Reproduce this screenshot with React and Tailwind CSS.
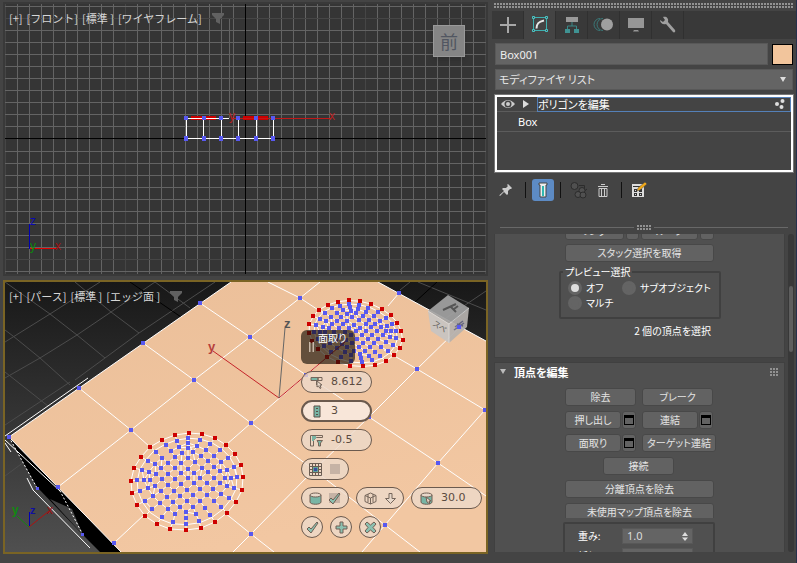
import { useState } from 'react';
import clsx from 'clsx';

// bevel mesh, drawn in a 400 x 370 local space
const RIM = [
  [207, 39], [246, 42], [285, 54], [318, 75], [345, 102], [363, 135], [369, 171], [366, 210],
  [348, 246], [321, 279], [285, 306], [243, 324], [198, 330], [150, 327], [111, 312], [75, 288],
  [51, 255], [36, 219], [33, 183], [42, 144], [63, 111], [90, 81], [126, 60], [165, 45],
];

const INNER = [
  [204, 54], [240, 60], [171, 63], [270, 72], [204, 69], [138, 75], [177, 81], [204, 84], [231, 78],
  [300, 90], [258, 90], [153, 93], [108, 96], [186, 99], [219, 96], [324, 114], [282, 108], [243, 108],
  [204, 114], [165, 111], [126, 114], [84, 123], [225, 126], [264, 123], [303, 126], [144, 129],
  [183, 129], [105, 132], [342, 141], [66, 150], [87, 156], [123, 144], [165, 144], [204, 147],
  [246, 144], [282, 141], [108, 162], [144, 162], [183, 159], [222, 159], [264, 156], [300, 153],
  [351, 171], [333, 174], [315, 174], [322, 150], [51, 180], [72, 180], [90, 180], [126, 177],
  [165, 177], [204, 174], [240, 174], [282, 174], [60, 213], [84, 204], [105, 198], [144, 195],
  [183, 192], [222, 189], [261, 189], [300, 189], [322, 198], [342, 204], [123, 213], [162, 213],
  [201, 210], [240, 207], [279, 207], [303, 222], [327, 234], [99, 228], [141, 231], [180, 228],
  [219, 225], [261, 225], [75, 243], [120, 249], [159, 246], [201, 243], [240, 243], [282, 243],
  [96, 267], [144, 267], [180, 261], [219, 261], [255, 264], [303, 261], [126, 291], [165, 282],
  [198, 276], [228, 282], [270, 285], [159, 306], [198, 294], [237, 303], [198, 312],
];

const ALL = [...RIM, ...INNER];

const EDGES = [];
ALL.forEach((a, i) => {
  ALL.forEach((b, j) => {
    if (j <= i || (i < 24 && j < 24)) return;
    if (Math.hypot(a[0] - b[0], a[1] - b[1]) < 32) EDGES.push([i, j]);
  });
});

const leftDisc = ([x, y]) => [120 + x / 3, 420 + y / 3];
const rightDisc = ([x, y]) => {
  const dx = x - 202;
  const dy = y - 181;
  return [200 + (467 + 0.8275 * dx + 0.17 * dy) / 3, 280 + (158 + 0.0094 * dx + 0.6807 * dy) / 3];
};

const SURFACE_VERTS = [
  [9, 437], [79, 388], [143, 343], [200, 303], [58, 487], [131, 430], [194, 380], [250, 337],
  [300, 298], [114, 543], [251, 423], [306, 375], [399, 293], [251, 534], [314, 470], [369, 417],
  [417, 369], [460, 327], [385, 525], [438, 463], [485, 410],
];

const SURFACE_LINES = [
  '58,487 131,430 194,380 250,337 300,298 320,282',
  '114,543 145,514',
  '226,445 251,423 306,375 318,365',
  '388,306 399,293',
  '233,552 251,534 314,470 369,417 417,369 460,327',
  '362,552 385,525 438,463 485,410',
  '79,388 131,430 150,447',
  '225,513 251,534 274,552',
  '143,343 194,380 251,423 314,470 385,525 420,552',
  '200,303 250,337 306,375 369,417 438,463 486,496',
  '268,282 300,298 326,315',
  '384,350 417,369 485,410',
];

const FLOOR_LINES = [
  '5,342 50,314 100,282',
  '5,378 40,358 77,335 111,312 155,282',
  '75,380 105,358 139,333 215,282',
  '5,330 13,336 40,358 70,385',
  '5,282 50,314 77,335 105,358',
  '75,282 111,312 139,333',
  '155,282 190,308',
  '5,425 70,382',
  '5,372 48,406',
  '5,476 24,462',
  '418,282 486,310',
  '400,290 410,282',
  '446,318 486,291',
];

const points = (list) => list.map((p) => p.join(',')).join(' ');

function Mesh({ map }) {
  const pts = ALL.map(map);
  const rim = RIM.map(map);
  const ring = RIM.map(([x, y]) => map([202 + (x - 202) * 0.89, 183 + (y - 183) * 0.89]));
  return (
    <g>
      <g fill="none" stroke="#fff" strokeWidth="1">
        <polygon points={points(rim)} />
        <polygon points={points(ring)} />
        {EDGES.map(([a, b]) => (
          <line key={`${a}-${b}`} x1={pts[a][0]} y1={pts[a][1]} x2={pts[b][0]} y2={pts[b][1]} />
        ))}
      </g>
      <g shapeRendering="crispEdges">
        {pts.map(([x, y], i) => (
          <rect
            key={i}
            x={Math.round(x) - 2}
            y={Math.round(y) - 2}
            width="4"
            height="4"
            fill={i < 24 ? '#cd0000' : '#5858f0'}
          />
        ))}
      </g>
    </g>
  );
}

function FrontScene() {
  const xs = Array.from({ length: 41 }, (_, i) => 5 + i * 12);
  const ys = [
    ...Array.from({ length: 12 }, (_, i) => 6 + i * 12),
    ...Array.from({ length: 11 }, (_, i) => 151 + i * 12),
  ];
  const cols = [186, 204, 221, 238, 256, 273];
  return (
    <svg
      viewBox="5 4 481 270"
      preserveAspectRatio="xMidYMid slice"
      className="block h-full w-full bg-[#353535] [font-family:'Liberation_Sans',sans-serif]"
    >
      <g shapeRendering="crispEdges">
        {xs.map((x) => (
          <rect key={x} x={x} y="4" width="1" height="270" fill={(x - 5) % 120 === 0 ? '#464646' : '#646464'} />
        ))}
        {ys.map((y) => (
          <rect key={y} x="5" y={y} width="481" height="1" fill={y === 18 || y === 259 ? '#464646' : '#646464'} />
        ))}
        <rect x="229" y="19" width="1" height="99" fill="#646464" />
        <rect x="245" y="4" width="1" height="270" fill="#000" />
        <rect x="5" y="138" width="481" height="1" fill="#000" />
        {cols.map((x) => (
          <rect key={x} x={x === 204 ? 203 : x} y="118" width="1" height="21" fill="#fff" />
        ))}
        <rect x="186" y="138" width="88" height="1" fill="#fff" />
        <rect x="191" y="116" width="25" height="4" fill="#cd0000" />
        <rect x="243" y="116" width="25" height="4" fill="#cd0000" />
        <rect x="186" y="118" width="43" height="1" fill="#fff" />
        <rect x="232" y="118" width="99" height="1" fill="#c01818" />
        {cols.map((x) => (
          <g key={x} fill="#5858f0">
            <rect x={x - 2} y="116" width="4" height="4" />
            <rect x={x - 2} y="136" width="4" height="5" />
          </g>
        ))}
        <path d="M29 224h1v25h-1z" fill="#0000b4" />
        <path d="M30 248h26v1H30z" fill="#e00000" />
      </g>
      <text x="229" y="120" fontSize="12" fill="#b82020">y</text>
      <text x="329" y="120" fontSize="12" fill="#b82020">x</text>
      <text x="30" y="225" fontSize="12" fill="#0a0ab0">z</text>
      <text x="30" y="250" fontSize="12" fill="#0b8a0b">y</text>
      <text x="55" y="250" fontSize="12" fill="#a01010">x</text>
    </svg>
  );
}

function PerspectiveScene() {
  return (
    <svg
      viewBox="5 282 481 270"
      preserveAspectRatio="xMidYMid slice"
      className="block h-full w-full [font-family:'Liberation_Sans',sans-serif]"
    >
      <defs>
        <linearGradient id="sky" x1="0" y1="0" x2="0" y2="1">
          <stop offset="0" stopColor="#181818" />
          <stop offset="1" stopColor="#505050" />
        </linearGradient>
        <linearGradient id="skin" x1="0" y1="0" x2="0.4" y2="1">
          <stop offset="0" stopColor="#ebbf99" />
          <stop offset="1" stopColor="#f2c7a2" />
        </linearGradient>
      </defs>
      <rect x="5" y="282" width="481" height="272" fill="url(#sky)" />
      <g fill="none" stroke="#4c4c4c" strokeWidth="1">
        {FLOOR_LINES.map((l) => (
          <polyline key={l} points={l} />
        ))}
      </g>
      <path d="M130 282 181 317M437 282 414 303" stroke="#000" />
      <polygon points="9,437 37,487 83,535 102,554 124,554" fill="#000" />
      <polygon points="50,499 83,535 72,509" fill="#444" />
      <polygon points="231,282 378,282 486,341 486,554 123,554 9,437" fill="url(#skin)" />
      <g fill="none" stroke="#fff" strokeWidth="1">
        <path d="M231 282 9 437 123 554M378 282 486 341M5 436 88 378" />
        <path d="M5 440 60 491M27 478 33 490 90 548M5 443l6 9" />
        <path d="M9 437 37 488M58 487 83 535" strokeDasharray="2 2" />
        {SURFACE_LINES.map((l) => (
          <polyline key={l} points={l} />
        ))}
      </g>
      <Mesh map={leftDisc} />
      <Mesh map={rightDisc} />
      <g shapeRendering="crispEdges" fill="#5858f0">
        {SURFACE_VERTS.map(([x, y]) => (
          <rect key={`${x}-${y}`} x={x - 2} y={y - 2} width="4" height="4" />
        ))}
        <rect x="36" y="487" width="3" height="3" />
        <rect x="81" y="533" width="3" height="3" />
      </g>
      <path d="M279 398 213 351M279 398 345 342" stroke="#c4242a" fill="none" />
      <path d="M279 398 285 328" stroke="#666" fill="none" />
      <text x="208" y="351" fontSize="13" fontWeight="bold" fill="#b5403c">y</text>
      <text x="284" y="328" fontSize="13" fontWeight="bold" fill="#555">z</text>
      <path d="M29.500 526V512" stroke="#0000b4" />
      <path d="M29 527 49 511" stroke="#b01010" />
      <path d="M29 527 17 516" stroke="#108a10" />
      <text x="30" y="514" fontSize="11" fontWeight="bold" fill="#1010a0">z</text>
      <text x="47" y="514" fontSize="12" fill="#a01010">x</text>
      <text x="12" y="514" fontSize="12" fontWeight="bold" fill="#108a10">y</text>
      {/* view cube */}
      <g opacity="0.93">
        <polygon points="448,295 469,308 449,324 428,311" fill="#a2a2a2" />
        <polygon points="428,311 449,324 449,343 431,331" fill="#c8c5c2" />
        <polygon points="449,324 469,308 467,327 449,343" fill="#b5b1ae" />
        <path d="M428 311 449 324 469 308M449 324v19" stroke="#d8d8d8" fill="none" />
        <path d="M443 310l13-6M450 306l6 6M454 309l4-3" stroke="#5a5a5a" strokeWidth="2" fill="none" />
        <text x="432" y="325" fontSize="8" fill="#555" transform="rotate(33 432 325)" className="[font-family:'Noto_Sans_CJK_JP',sans-serif]">
          スペ
        </text>
        <path d="M454 330l10-7M457 324l6 2M455 327l8-6" stroke="#6a6a86" strokeWidth="1.500" />
      </g>
      <rect x="457" y="325" width="4" height="4" fill="#5858f0" />
    </svg>
  );
}

function Funnel() {
  return (
    <svg viewBox="0 0 12 11" className="h-[11px] w-3" fill="#616161">
      <path d="M0 0h12v2L8 6v5L4 9V6L0 2z" />
    </svg>
  );
}

function ViewportLabels({ items }) {
  return (
    <div className="absolute top-[6px] left-1 flex items-center gap-1 text-[11px] leading-4 text-[#d6d6d6] [font-feature-settings:normal]">
      {items.map((t) => (
        <button key={t} type="button">
          {t}
        </button>
      ))}
      <button type="button" aria-label="フィルタ" className="ml-[6px]">
        <Funnel />
      </button>
    </div>
  );
}

const pill = 'flex h-[22px] items-center rounded-full border-[#6b5a4e] bg-[#ecd9cb]/80 text-[#5a4a40]';

function CaddyField({ label, value, icon, active }) {
  return (
    <label
      className={clsx(pill, 'w-[71px] gap-2', active ? 'border-2 bg-[#f8e6d9] pl-[7px]' : 'border pl-2')}
    >
      {icon}
      <input
        aria-label={label}
        defaultValue={value}
        className="w-9 bg-transparent text-[11px] leading-4 outline-none [font-family:'DejaVu_Sans',sans-serif]"
      />
    </label>
  );
}

const caddySvg = 'h-[13px] w-[13px] shrink-0';

function Check() {
  return (
    <svg viewBox="0 0 13 13" className={caddySvg}>
      <path d="M1 8l2-2 2 2 6-7 1 1-7 10z" fill="#8cc0b0" stroke="#705f54" />
    </svg>
  );
}

function Caddy() {
  return (
    <div className="absolute top-12 left-[296px] flex flex-col gap-[7px]">
      <div className="flex h-[34px] w-[54px] gap-1 rounded-md bg-[#191108]/65 pl-2 text-[10px] leading-4 text-white">
        <svg viewBox="0 0 5 10" className="mt-3 h-[10px] w-[5px]" fill="#c8b8a8">
          <path d="M0 0h1.500v10H0zM3.500 0H5v10H3.500z" />
        </svg>
        面取り
      </div>
      <CaddyField
        label="量"
        value="8.612"
        icon={
          <svg viewBox="0 0 13 13" className={caddySvg} fill="none" stroke="#75665b">
            <path d="M1 1.500h7v3H1z" fill="#78b5a5" />
            <path d="M8 1.500h4v3H8zM6.500 5v4" />
            <path d="M7 5l5 4H10l1 3-1 .5L8.500 10 7 11z" fill="#e8d8ca" />
          </svg>
        }
      />
      <CaddyField
        active
        label="セグメント"
        value="3"
        icon={
          <svg viewBox="0 0 13 13" className={caddySvg} stroke="#5b5048">
            <path d="M4 1h6v11H4z" fill="#78b5a5" />
            <path d="M6 3.500h2M6 6.500h2M6 9.500h2" />
          </svg>
        }
      />
      <CaddyField
        label="張り"
        value="-0.5"
        icon={
          <svg viewBox="0 0 13 13" className={caddySvg} fill="none" stroke="#75665b">
            <path d="M.5 12V1.500h12v2h-6L3.500 6v6H.5" />
            <path d="M2 2h4v3H4v2H2z" fill="#78b5a5" stroke="none" />
            <path d="M7 6.500h5.500L10.500 9v3h-2V9z" fill="#78b5a5" />
          </svg>
        }
      />
      <button type="button" aria-label="面を開く" className={clsx(pill, 'w-12 gap-2 border pl-[7px]')}>
        <svg viewBox="0 0 13 13" className={caddySvg} fill="none" stroke="#6b5d52">
          <path d="M.5.5h12v12H.5zM3.500 0v13M6.500 0v13M9.500 0v13M0 3.500h13M0 6.500h13M0 9.500h13" />
          <path d="M4.500 4.500h4v4h-4z" fill="#3f4ea0" stroke="#5ba498" />
        </svg>
        <span className="h-[10px] w-[10px] bg-[#c6b3a5]" />
      </button>
      <div className="flex gap-[7px]">
        <button type="button" aria-label="スムーズ" className={clsx(pill, 'w-12 gap-[7px] border pl-[7px]')}>
          <svg viewBox="0 0 13 13" className={caddySvg} stroke="#705f54">
            <path d="M1 3v7c0 3 11 3 11 0V3z" fill="#78b5a5" />
            <ellipse cx="6.500" cy="3" rx="5.500" ry="2" fill="#e8d8ca" />
          </svg>
          <span className="flex h-[10px] w-[11px] items-center justify-center bg-[#c6b3a5]">
            <Check />
          </span>
        </button>
        <button type="button" aria-label="スムーズ タイプ" className={clsx(pill, 'w-12 gap-[7px] border pl-[7px]')}>
          <svg viewBox="0 0 13 13" className={caddySvg} fill="none" stroke="#75665b">
            <path d="M6.500 1 12 3.500v6L6.500 12 1 9.500v-6zM1 3.500 6.500 6 12 3.500M6.500 6v6M4 2v8M9 2v8" />
          </svg>
          <svg viewBox="0 0 13 13" className={caddySvg} fill="#e8d8ca" stroke="#75665b">
            <path d="M5 1.500h3v5h3.500l-5 5-5-5H5z" />
          </svg>
        </button>
        <CaddyField
          label="スムーズしきい値"
          value="30.0"
          icon={
            <svg viewBox="0 0 13 13" className={caddySvg} stroke="#705f54">
              <path d="M1 3v7c0 3 11 3 11 0V3z" fill="#78b5a5" />
              <ellipse cx="6.500" cy="3" rx="5.500" ry="2" fill="#e8d8ca" />
              <path d="M6 5l5 4H9l1 3-3-2z" fill="#e8d8ca" />
            </svg>
          }
        />
      </div>
      <div className="flex gap-[7px]">
        <button type="button" aria-label="OK" className={clsx(pill, 'w-[22px] justify-center border')}>
          <Check />
        </button>
        <button type="button" aria-label="適用して続行" className={clsx(pill, 'w-[22px] justify-center border')}>
          <svg viewBox="0 0 13 13" className={caddySvg} fill="#8cc0b0" stroke="#705f54">
            <path d="M5 1h3v4h4v3H8v4H5V8H1V5h4z" />
          </svg>
        </button>
        <button type="button" aria-label="キャンセル" className={clsx(pill, 'w-[22px] justify-center border')}>
          <svg viewBox="0 0 13 13" className={caddySvg} fill="#8cc0b0" stroke="#705f54">
            <path d="M3 1l3.500 3L10 1l2 2-3 3.500L12 10l-2 2-3.500-3L3 12l-2-2 3-3.500L1 3z" />
          </svg>
        </button>
      </div>
    </div>
  );
}

const TABS = [
  {
    name: '作成',
    icon: <path d="M12 4v16M4 12h16" stroke="#a8a8a8" strokeWidth="2" />,
  },
  {
    name: '修正',
    icon: (
      <g fill="none">
        <path d="M5.500 4.500h13v13h-13z" stroke="#3fb0b0" />
        <path d="M8.500 15.500c0-5 2-7 7.500-8" stroke="#e8e8e8" strokeWidth="2" />
        <g fill="#444" stroke="#48c4c4">
          <path d="M4.500 3.500h2v2h-2zM17.500 3.500h2v2h-2zM4.500 16.500h2v2h-2zM17.500 16.500h2v2h-2z" />
        </g>
      </g>
    ),
  },
  {
    name: '階層',
    icon: (
      <g>
        <path d="M6 4h12v5H6z" fill="#999" />
        <path d="M12 9v4M7.500 16v-3h9v3" fill="none" stroke="#3a8888" />
        <path d="M5 16h5v4H5zM14 16h5v4h-5z" fill="#3f9292" />
      </g>
    ),
  },
  {
    name: 'モーション',
    icon: (
      <g fill="none" stroke="#3a7878">
        <path d="M8 5.500a6 6 0 0 0 0 12M11 5.500a6 6 0 0 0 0 12" />
        <circle cx="15" cy="11.500" r="6" fill="#a0a0a0" stroke="none" />
      </g>
    ),
  },
  {
    name: '表示',
    icon: <path d="M4 5h16v10H4zM10 17h4l1 1.500H9z" fill="#969696" />,
  },
  {
    name: 'ユーティリティ',
    icon: (
      <path
        d="M4 7l3 2 2-2-2-3c3-1 6 1 5 5l7 8c1 2-1 3-2 2l-7-8c-3 1-6-1-6-4z"
        fill="#a0a0a0"
      />
    ),
  },
];

function CommandTabs() {
  const [tab, setTab] = useState('修正');
  return (
    <div className="mt-[2px] flex h-7 bg-[#393939]">
      {TABS.map((t) => (
        <button
          key={t.name}
          type="button"
          aria-label={t.name}
          onClick={() => setTab(t.name)}
          className={clsx(
            'flex w-8 items-center justify-center border-r border-[#303030]',
            tab === t.name && 'bg-[#444]'
          )}
        >
          <svg viewBox="0 0 24 24" className="h-6 w-6">
            {t.icon}
          </svg>
        </button>
      ))}
    </div>
  );
}

const btn =
  'flex h-[18px] items-center justify-center rounded-[3px] border border-[#484848] bg-[#626262] text-[10px] leading-4 text-[#e4e4e4]';

function PanelButton({ children, className = 'w-[71px]' }) {
  return (
    <button type="button" className={clsx(btn, className)}>
      {children}
    </button>
  );
}

function SettingsButton({ label }) {
  return (
    <button type="button" aria-label={label} className={clsx(btn, 'w-[14px]')}>
      <span className="h-[10px] w-[10px] shrink-0 border border-t-[3px] border-black" />
    </button>
  );
}

function Radio({ label, checked, onChange }) {
  return (
    <label className="flex h-[15px] items-center gap-1 text-[10px] leading-4 text-white">
      <input
        type="radio"
        name="preview"
        checked={checked}
        onChange={onChange}
        className="h-[14px] w-[14px] appearance-none rounded-full border-[3px] border-[#646464] bg-[#646464] checked:bg-[#dedede]"
      />
      {label}
    </label>
  );
}

function Spinner({ label, value }) {
  return (
    <div className="flex items-start gap-[17px] text-[10px]">
      <label htmlFor={label} className="w-[27px] leading-4 whitespace-nowrap text-white">
        {label}
      </label>
      <div className="flex h-4 w-[71px] items-center justify-between border border-[#585858] bg-[#646464] px-1">
        <input
          id={label}
          defaultValue={value}
          className="w-10 bg-transparent text-[11px] leading-3 text-[#dcdcdc] outline-none [font-family:'Noto_Sans',sans-serif]"
        />
        <svg viewBox="0 0 6 9" className="h-[9px] w-[6px]" fill="#ddd">
          <path d="M0 4l3-4 3 4zM0 5.500h6L3 9z" />
        </svg>
      </div>
    </div>
  );
}

function DotStrip({ className }) {
  return (
    <div
      className={clsx(
        'bg-[radial-gradient(circle_at_1px_1px,#929292_0.8px,transparent_0.9px)] bg-[size:3px_3px]',
        className
      )}
    />
  );
}

function ModifierStack() {
  return (
    <div className="h-[77px] border-2 border-white bg-[#444] text-[11px] text-white outline outline-[#777]">
      <div className="flex h-[15px] items-center border-b border-[#5c5c5c] pl-1">
        <svg viewBox="0 0 14 10" className="h-[10px] w-[14px]">
          <path d="M0 5Q7-3 14 5Q7 13 0 5z" fill="#ccc" />
          <circle cx="7" cy="5" r="3.500" fill="#444" />
          <circle cx="7" cy="5" r="2" fill="#ccc" />
        </svg>
        <svg viewBox="0 0 6 8" className="ml-2 h-2 w-[6px]" fill="#ddd">
          <path d="M0 0l6 4-6 4z" />
        </svg>
        <button
          type="button"
          className="ml-2 flex h-[15px] flex-1 items-center justify-between border border-[#5480b8] pr-1 leading-3"
        >
          ポリゴンを編集
          <svg viewBox="0 0 12 12" className="h-3 w-3" fill="#ddd">
            <circle cx="3" cy="6" r="2" />
            <circle cx="8.500" cy="3" r="2" />
            <circle cx="7.500" cy="9" r="2" />
          </svg>
        </button>
      </div>
      <button
        type="button"
        className="block h-5 w-full border-b border-[#5c5c5c] pl-[21px] text-left text-[11px] leading-5 [font-family:'Noto_Sans',sans-serif]"
      >
        Box
      </button>
    </div>
  );
}

function StackToolbar() {
  const sep = <span className="h-4 w-px bg-[#111]" />;
  return (
    <div className="mt-[6px] flex h-6 items-center pl-1">
      <button type="button" aria-label="スタックを固定" className="mr-3">
        <svg viewBox="0 0 14 14" className="h-[14px] w-[14px]" fill="#ccc">
          <path d="M9 1l4 4-1 1h-1L9 8v3l-1 1-3-3-4 4-.7-.7L5 8 3 6l1-1h3l2-2-1-1z" />
        </svg>
      </button>
      {sep}
      <button
        type="button"
        aria-label="最終結果を表示"
        className="mx-[6px] flex h-[22px] w-[22px] items-center justify-center rounded-[3px] bg-[#5d8bc4]"
      >
        <svg viewBox="0 0 10 16" className="h-4 w-[10px]">
          <path d="M1 1h8v2H8v12H2V3H1z" fill="#eee" stroke="#444" />
          <path d="M4 4h2v10H4z" fill="#30b8b0" />
        </svg>
      </button>
      {sep}
      <button type="button" aria-label="固有にする" className="ml-[9px]">
        <svg viewBox="0 0 17 17" className="h-[17px] w-[17px]" fill="#505050" stroke="#2c2c2c">
          <circle cx="4.500" cy="4" r="3.500" />
          <path d="M9 3.500h5.500v4M12 7l2.500 2L17 7" fill="none" />
          <circle cx="12" cy="8.500" r="3" />
          <circle cx="8" cy="12.500" r="3" />
          <circle cx="13" cy="13" r="3" />
        </svg>
      </button>
      <button type="button" aria-label="モディファイヤを除去" className="mx-[10px]">
        <svg viewBox="0 0 12 15" className="h-[15px] w-3" fill="none" stroke="#ccc">
          <path d="M4 1.500h4M1 3.500h10M2 5.500h8v8H2zM4.500 5v9M7.500 5v9" />
        </svg>
      </button>
      <span className="mr-[9px] ml-[2px] h-4 w-px bg-[#111]" />
      <button type="button" aria-label="モディファイヤ セットを設定">
        <svg viewBox="0 0 16 16" className="h-4 w-4">
          <path d="M1 2h12v13H1z" fill="#ddd" />
          <path d="M2 4h9v1H2zM3 7h3v3H3zM8 7h3v3H8zM3 11h3v3H3zM8 11h3v3H8z" fill="#333" />
          <path d="M4 8h1v1H4zM4 12h1v1H4zM9 12h1v1H9z" fill="#ddd" />
          <path d="M6 9l1-3 7-6 2 2-7 6z" fill="#f0a818" stroke="#444" strokeWidth=".5" />
        </svg>
      </button>
    </div>
  );
}

function Rollouts() {
  const [preview, setPreview] = useState('オフ');
  const radio = (name) => <Radio label={name} checked={preview === name} onChange={() => setPreview(name)} />;
  return (
    <div className="flex min-w-0 flex-1 flex-col gap-1">
      <section className="-mt-[13px] h-[137px] shrink-0 border border-[#404040] bg-[#505050]">
        <div className="ml-[70px] flex w-[149px] flex-col">
          <div className="flex h-[18px] gap-[2px]">
            <PanelButton className="w-[59px]">リング</PanelButton>
            <PanelButton className="w-[14px]">{' '}</PanelButton>
            <PanelButton className="w-[57px]">ループ</PanelButton>
            <PanelButton className="w-[14px]">{' '}</PanelButton>
          </div>
          <PanelButton className="mt-1 w-full">スタック選択を取得</PanelButton>
        </div>
        <fieldset className="mt-[2px] ml-16 h-[55px] w-[162px] rounded-[2px] border-2 border-[#404040] px-[7px]">
          <legend className="-ml-[5px] px-[2px] text-[10px] leading-4 text-white">プレビュー選択</legend>
          <div className="grid grid-cols-[54px_1fr] whitespace-nowrap">
            {radio('オフ')}
            {radio('サブオブジェクト')}
            {radio('マルチ')}
          </div>
        </fieldset>
        <p className="mt-1 pr-[73px] text-right text-[10px] leading-4 text-white">2 個の頂点を選択</p>
      </section>

      <section className="flex-1 border border-[#404040] bg-[#505050]">
        <div className="flex h-[17px] items-center justify-between pr-[6px] pl-[5px]">
          <h2 className="text-[11px] leading-4 font-bold text-white">
            <button type="button" className="flex items-center gap-2">
              <svg viewBox="0 0 6 5" className="h-[5px] w-[6px]" fill="#bbb">
                <path d="M0 0h6L3 5z" />
              </svg>
              頂点を編集
            </button>
          </h2>
          <DotStrip className="h-2 w-2" />
        </div>
        <div className="mt-2 ml-[70px] flex w-[151px] flex-col gap-[5px]">
          <div className="flex gap-[6px]">
            <PanelButton>除去</PanelButton>
            <PanelButton>ブレーク</PanelButton>
          </div>
          <div className="flex gap-[6px]">
            <div className="flex gap-px">
              <PanelButton className="w-14">押し出し</PanelButton>
              <SettingsButton label="押し出し設定" />
            </div>
            <div className="flex gap-px">
              <PanelButton className="w-14">連結</PanelButton>
              <SettingsButton label="連結設定" />
            </div>
          </div>
          <div className="flex gap-[6px]">
            <div className="flex gap-px">
              <PanelButton className="w-14">面取り</PanelButton>
              <SettingsButton label="面取り設定" />
            </div>
            <PanelButton className="w-[74px]">ターゲット連結</PanelButton>
          </div>
          <PanelButton className="ml-[38px] w-[71px]">接続</PanelButton>
          <PanelButton className="w-[149px]">分離頂点を除去</PanelButton>
          <div className="h-[15px] overflow-hidden">
            <PanelButton className="w-[149px]">未使用マップ頂点を除去</PanelButton>
          </div>
        </div>
        <div className="mt-1 ml-[68px] flex w-[152px] flex-col gap-1 rounded-[2px] border-2 border-[#404040] pt-1 pb-1 pl-[13px]">
          <Spinner label="重み:" value="1.0" />
          <Spinner label="折り目:" value="0.0" />
        </div>
      </section>
    </div>
  );
}

function CommandPanel() {
  const [name, setName] = useState('Box001');
  return (
    <aside className="flex w-[309px] shrink-0 flex-col border-r border-[#26304c] pb-[11px] pl-1">
      <DotStrip className="mt-[3px] mr-[3px] ml-[2px] h-[6px]" />
      <CommandTabs />
      <div className="flex flex-col pr-[3px] pl-[3px]">
        <div className="mt-1 flex h-[22px] items-center gap-1">
          <input
            aria-label="オブジェクト名"
            value={name}
            onChange={(e) => setName(e.target.value)}
            className="h-[22px] min-w-0 flex-1 border border-[#585858] bg-[#646464] px-1 text-[11px] text-[#eee] outline-none [font-family:'Noto_Sans',sans-serif]"
          />
          <button
            type="button"
            aria-label="オブジェクト カラー"
            className="h-[21px] w-[21px] border border-black bg-[#f2c59c]"
          />
        </div>
        <div className="relative mt-1 mb-[5px]">
          <select
            aria-label="モディファイヤ リスト"
            className="block h-[21px] w-full appearance-none border border-[#585858] bg-[#646464] px-[3px] text-[11px] text-[#e4e4e4] outline-none"
          >
            <option>モディファイヤ リスト</option>
          </select>
          <svg viewBox="0 0 6 5" className="absolute top-2 right-[7px] h-[5px] w-[6px]" fill="#ddd">
            <path d="M0 0h6L3 5z" />
          </svg>
        </div>
        <ModifierStack />
        <StackToolbar />
        <div className="mx-[5px] mt-[22px] flex h-[6px] items-center gap-[3px]">
          <span className="h-px flex-1 bg-[#686868]" />
          <DotStrip className="h-[5px] w-[14px]" />
          <span className="h-px flex-1 bg-[#686868]" />
        </div>
      </div>
      <div className="mt-1 flex min-h-0 flex-1 gap-[3px] overflow-hidden pr-[2px] pl-[2px]">
        <Rollouts />
        <div className="w-[6px] rounded-full bg-[#383838] px-px pt-[52px]">
          <div className="h-[66px] rounded-full bg-[#5e5e5e]" />
        </div>
      </div>
    </aside>
  );
}

export default function App() {
  return (
    <div className="flex h-screen overflow-hidden bg-[#444] [font-family:'Noto_Sans_CJK_JP',sans-serif] [font-feature-settings:'palt']">
      <main className="flex min-w-0 flex-1 flex-col gap-1 pt-[2px] pb-[9px] pl-[3px]">
        <section className="relative min-h-0 flex-1 overflow-hidden border-2 border-[#393939]">
          <FrontScene />
          <ViewportLabels items={['[+]', '[フロント]', '[標準 ]', '[ワイヤフレーム]']} />
          <button
            type="button"
            className="absolute top-[21px] right-[21px] flex h-8 w-8 items-center justify-center border border-[#9a9a9a] bg-[#858585] text-[18px] leading-none text-[#515661] shadow-md"
          >
            前
          </button>
        </section>
        <section className="relative min-h-0 flex-1 overflow-hidden border-2 border-[#7a6424]">
          <PerspectiveScene />
          <ViewportLabels items={['[+]', '[パース]', '[標準 ]', '[エッジ面 ]']} />
          <Caddy />
        </section>
      </main>
      <CommandPanel />
    </div>
  );
}
